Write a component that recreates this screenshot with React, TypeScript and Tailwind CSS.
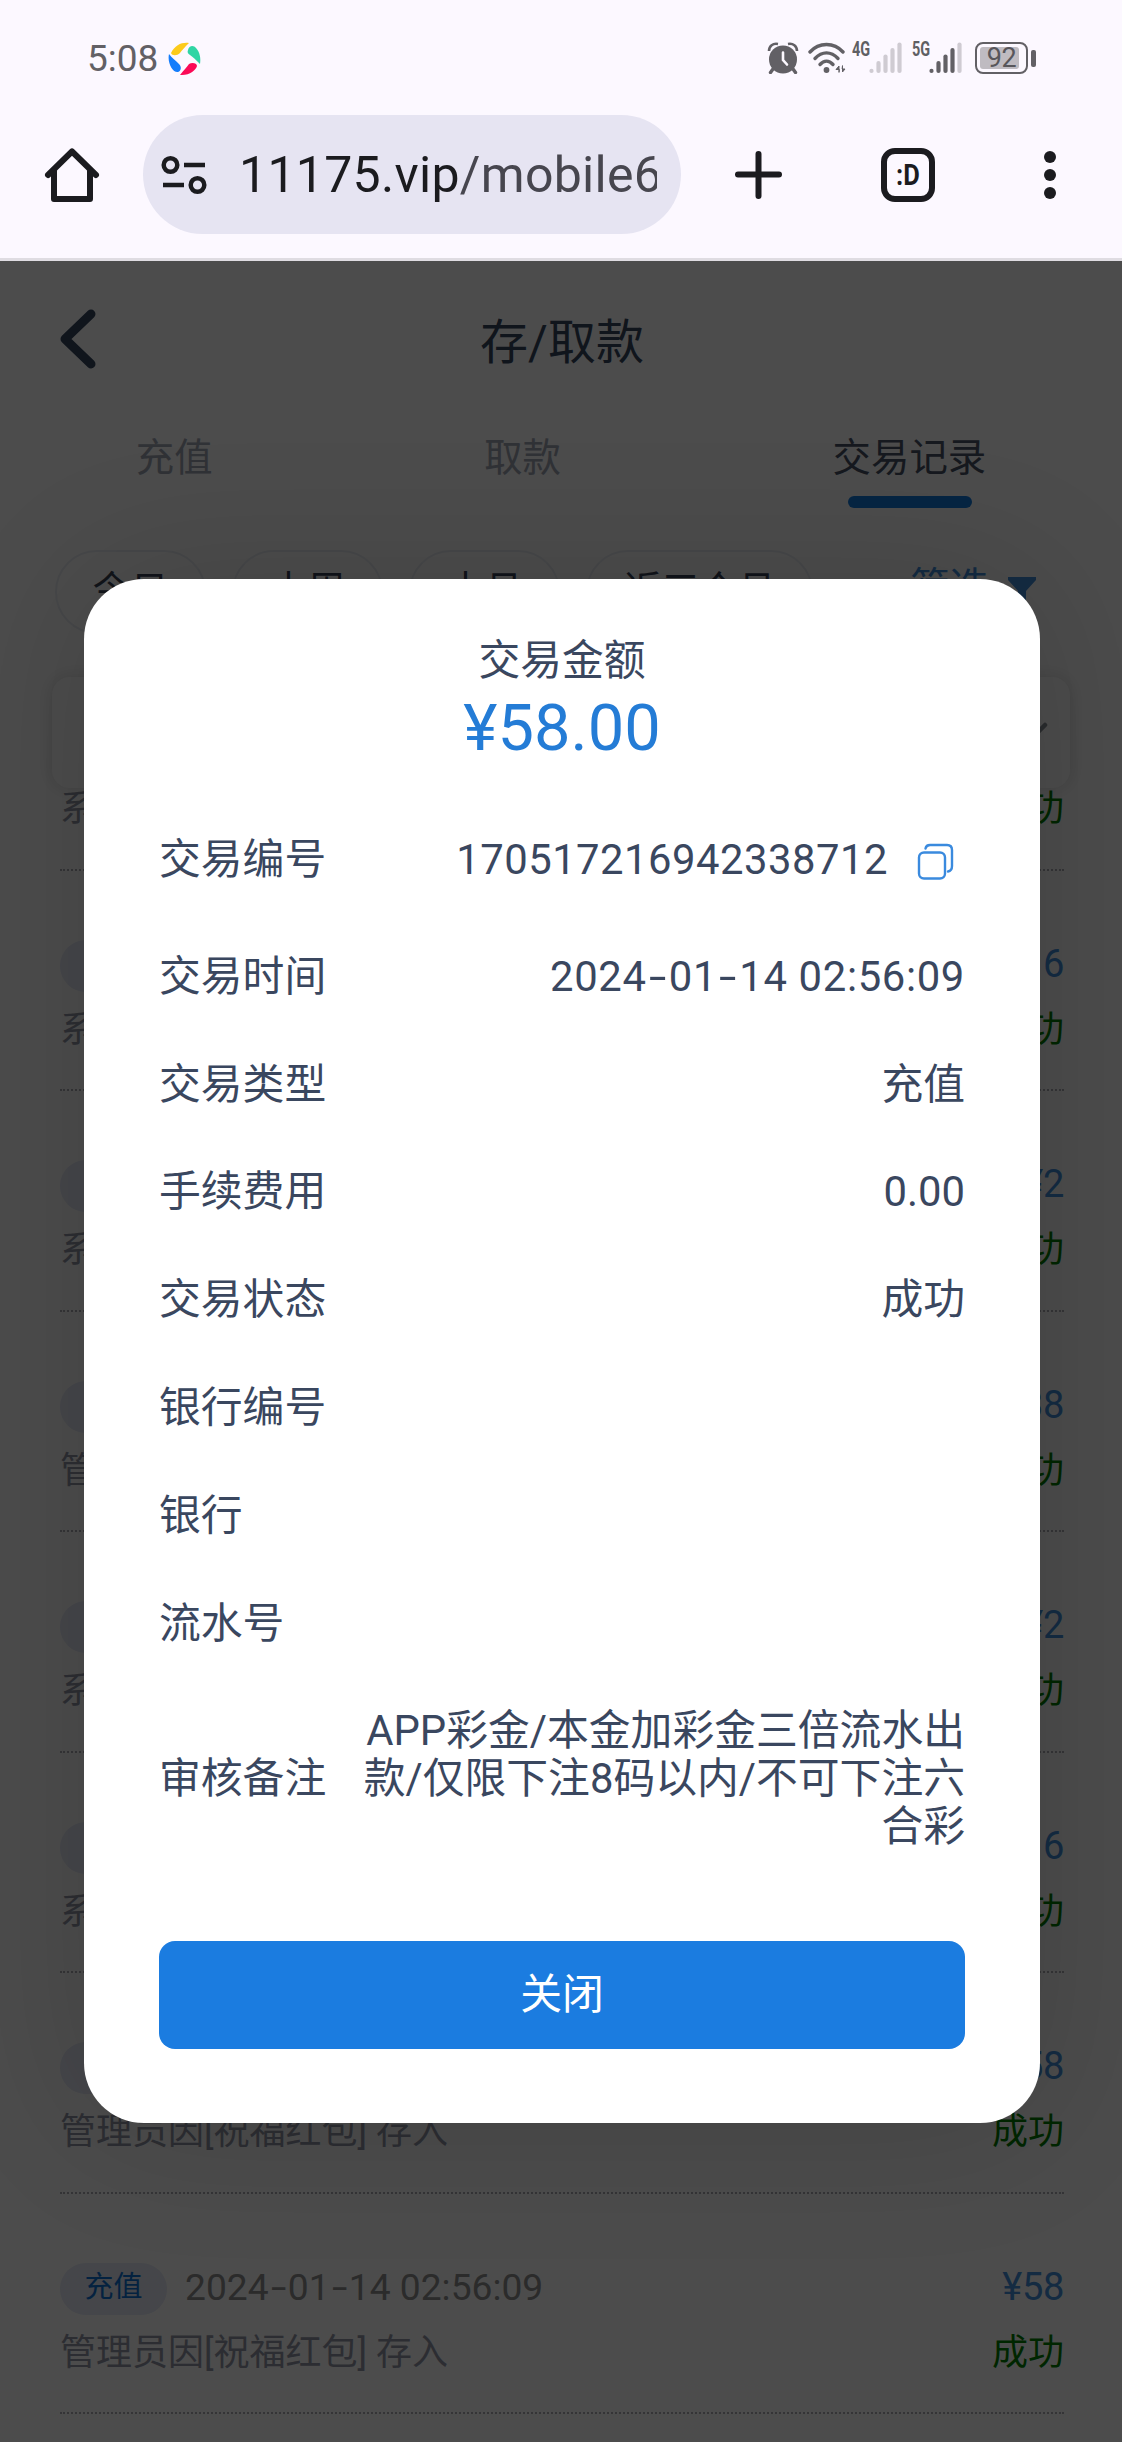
// src/App.tsx
import React from 'react';

interface TransactionRecord {
  id: number;
  createdAt: string;
  description: string;
  amount: string;
}

interface DetailRowProps {
  label: string;
  children?: React.ReactNode;
}

const records: TransactionRecord[] = [
  { id: 1, createdAt: '2024-01-14 02:56:09', description: '系统因[祝福红包] 存入', amount: '¥16' },
  { id: 2, createdAt: '2024-01-14 02:56:09', description: '系统因[祝福红包] 存入', amount: '¥16' },
  { id: 3, createdAt: '2024-01-14 02:56:09', description: '系统因[祝福红包] 存入', amount: '¥2' },
  { id: 4, createdAt: '2024-01-14 02:56:09', description: '管理员因[祝福红包] 存入', amount: '¥38' },
  { id: 5, createdAt: '2024-01-14 02:56:09', description: '系统因[祝福红包] 存入', amount: '¥2' },
  { id: 6, createdAt: '2024-01-14 02:56:09', description: '系统因[祝福红包] 存入', amount: '¥16' },
  { id: 7, createdAt: '2024-01-14 02:56:09', description: '管理员因[祝福红包] 存入', amount: '¥58' },
  { id: 8, createdAt: '2024-01-14 02:56:09', description: '管理员因[祝福红包] 存入', amount: '¥58' },
];

const ranges = ['今日', '本周', '本月', '近三个月'];

// dates are set with wide dashes
const DateText: React.FC<{ value: string }> = ({ value }) => (
  <>
    {value.split('-').map((part, i) => (
      <React.Fragment key={i}>
        {i > 0 && <span className="inline-block scale-x-[1.5] px-[0.12em]">-</span>}
        {part}
      </React.Fragment>
    ))}
  </>
);

const SignalBars: React.FC<{ label: string; active: number }> = ({ label, active }) => (
  <div className="flex h-[32px] items-end">
    <span className="h-[32px] w-[17px] origin-left scale-x-[0.74] text-[19.5px] leading-[16px] font-bold text-[#5f5f63]">
      {label}
    </span>
    <svg width="34" height="32" viewBox="0 0 34 32" strokeWidth="4.2" strokeLinecap="round">
      {[28.9, 21, 14.5, 8, 2.5].map((y, i) => (
        <line key={y} x1={2.5 + i * 7} x2={2.5 + i * 7} y1={y} y2="29" stroke={i < active ? '#626065' : '#cfcbd2'} />
      ))}
    </svg>
  </div>
);

const StatusBar: React.FC = () => (
  <div className="flex h-[115px] items-start justify-between pt-[42px] pr-[86px] pl-[87px]">
    <div className="flex items-center gap-[10px]">
      <span className="text-[37px] leading-[32px] text-[#626065]">5:08</span>
      <svg width="33" height="34" viewBox="0 0 33 34">
        <path d="M3 11C7 3 14 0 21 1C17 5 14 8 12 11C9 14 4 14 3 11Z" fill="#fccb1c" />
        <path d="M20 8C21 3 26 3 28 6C32 10 33 17 32 22C28 18 25 15 22 13C20 12 19 10 20 8Z" fill="#30d5a4" />
        <path d="M12 33C16 28 19 25 21 22C24 20 29 21 29 24C28 28 21 34 12 33Z" fill="#fb0a56" />
        <path d="M1 12C4 16 7 18 11 22C14 25 13 29 10 30C5 31 -1 21 1 12Z" fill="#147dfb" />
      </svg>
    </div>
    <div className="flex items-start">
      <svg width="32" height="32" viewBox="0 0 32 32">
        <circle cx="16" cy="17.5" r="14" fill="#626065" />
        <path d="M2 9C2 4 6 1 11 2M30 9C30 4 26 1 21 2" fill="none" stroke="#626065" strokeWidth="2.6" />
        <path d="M6 27L3.5 30.5M26 27L28.5 30.5" stroke="#626065" strokeWidth="3.4" strokeLinecap="round" />
        <path d="M16 10.500V18L20 22.500" fill="none" stroke="#fcf8ff" strokeWidth="2.6" strokeLinecap="round" />
      </svg>
      <svg className="ml-[9px]" width="38" height="32" viewBox="0 0 38 32" fill="none" stroke="#626065" strokeLinecap="round">
        <path d="M2 10C11 0 26 0 35 10" strokeWidth="3.4" />
        <path d="M7 16.500C14 9 23 9 30 16.500" strokeWidth="3.4" />
        <path d="M12 22.500C16 18 21 18 25 22.500" strokeWidth="3.4" />
        <circle cx="18.500" cy="28" r="2.900" fill="#626065" stroke="none" />
        <path d="M31 30V24L28 27.500H31ZM34.500 24V30L37 27H34.500Z" fill="#626065" strokeWidth="1" />
      </svg>
      <div className="ml-[6px]">
        <SignalBars label="4G" active={0} />
      </div>
      <div className="ml-[9px]">
        <SignalBars label="5G" active={4} />
      </div>
      <div className="ml-[12px] flex items-center">
        <div className="flex h-[32px] w-[53px] rounded-[8px] border-[2.5px] border-[#626065] p-[3px]">
          <div className="flex-1 rounded-[3px] bg-[#bfbbc1] pl-[4px] text-center text-[27px] leading-[22px] tracking-[-0.5px] text-[#58565b]">
            92
          </div>
          <div className="w-[4px]" />
        </div>
        <div className="ml-[3px] h-[17px] w-[5px] rounded-[2px] bg-[#626065]" />
      </div>
    </div>
  </div>
);

const BrowserBar: React.FC = () => (
  <div className="flex h-[119px] items-center">
    <svg className="ml-[44px]" width="56" height="58" viewBox="0 0 56 58" fill="none" stroke="#1b1b1f" strokeWidth="6" strokeLinejoin="round" strokeLinecap="round">
      <path d="M4 29L28 5.500L52 29" />
      <path d="M10 25V53H46V25" />
    </svg>
    <div className="ml-[43px] flex h-[119px] w-[538px] items-center rounded-full bg-[#e6e4f2] pl-[17px]">
      <svg width="48" height="42" viewBox="0 0 48 42" fill="none" stroke="#1b1b1f" strokeWidth="4.500">
        <circle cx="10.500" cy="11" r="6.800" />
        <path d="M24 11H45M3 31H24" />
        <circle cx="37.500" cy="31" r="6.800" />
      </svg>
      <div className="ml-[31px] w-[418px] overflow-hidden text-[50px] leading-[66px] tracking-[0.3px] whitespace-nowrap text-[#1b1b1f]">
        11175.vip<span className="text-[#47464f]">/mobile6</span>
      </div>
    </div>
    <svg className="ml-[53px]" width="49" height="50" viewBox="0 0 49 50" stroke="#1b1b1f" strokeWidth="6" strokeLinecap="round">
      <path d="M24.500 4V46M4 24.500H45" />
    </svg>
    <div className="ml-[98px] flex h-[54px] w-[54px] items-center justify-center rounded-[14px] border-[6px] border-[#1b1b1f]">
      <span className="scale-x-[0.85] text-[30px] leading-[40px] font-bold text-[#1b1b1f]">:D</span>
    </div>
    <div className="ml-[109px] flex flex-col gap-[6px]">
      <div className="size-[12px] rounded-full bg-[#1b1b1f]" />
      <div className="size-[12px] rounded-full bg-[#1b1b1f]" />
      <div className="size-[12px] rounded-full bg-[#1b1b1f]" />
    </div>
  </div>
);

const RecordItem: React.FC<{ record: TransactionRecord }> = ({ record }) => (
  <li className="h-[220.5px] border-b-2 border-dotted border-[#b0b0b4] pt-[69px]">
    <div className="flex h-[52px] items-center">
      <span className="h-[52px] w-[107px] rounded-full bg-[#e6eaf7] text-center text-[29px] leading-[49px] text-[#0e73d6]">充值</span>
      <span className="ml-[18px] pb-[3px] text-[37.2px] leading-[49px] text-[#8f8f8f]">
        <DateText value={record.createdAt} />
      </span>
      <span className="ml-auto pb-[3px] text-[38px] leading-[49px] tracking-[-0.3px] text-[#4590dd]">{record.amount}</span>
    </div>
    <div className="mt-[14px] flex justify-between text-[36px] leading-[48px]">
      <span className="text-[#9498a8]">{record.description}</span>
      <span className="text-[#008000]">成功</span>
    </div>
  </li>
);

const TransactionPage: React.FC = () => (
  <div className="bg-white">
    <div className="flex h-[162px] items-center">
      <svg className="ml-[57px] -mt-[6px]" width="40" height="62" viewBox="0 0 40 62" fill="none" stroke="#36475f" strokeWidth="9" strokeLinecap="round" strokeLinejoin="round">
        <path d="M34 6L8 31L34 56" />
      </svg>
      <h1 className="mr-[95px] flex-1 pt-[2px] text-center text-[48px] leading-[66px] text-[#36475f]">存/取款</h1>
    </div>
    <div className="flex justify-around pt-[5px] text-[38.4px] leading-[60px]">
      <span className="text-[#a2a7b5]">充值</span>
      <span className="text-[#a2a7b5]">取款</span>
      <span className="flex flex-col items-center text-[#4b5568]">
        交易记录
        <span className="mt-[8px] h-[12px] w-[124px] translate-x-[1px] rounded-full bg-[#177cdf]" />
      </span>
    </div>
    <div className="mt-[42px] flex gap-[26px] pl-[55px] text-[38px] leading-[76px]">
      {ranges.map((range) => (
        <span key={range} className="h-[84px] rounded-full border-2 border-[#eceff3] px-[35.5px] text-[#3b4459]">
          {range}
        </span>
      ))}
      <span className="ml-[71px] flex text-[39.5px] text-[#4590dd]">
        筛选
        <svg className="mt-[26px] ml-[18px]" width="30" height="34" viewBox="0 0 30 34" fill="#4590dd">
          <path d="M1 1H29V4L19 15V33L11 27V15L1 4Z" />
        </svg>
      </span>
    </div>
    <div className="relative z-10 mx-auto mt-[43px] flex h-[111px] w-[1018px] items-center justify-end rounded-[18px] bg-white pr-[21px] shadow-[0_0_18px_rgba(0,0,0,0.14)]">
      <svg width="40" height="24" viewBox="0 0 40 24" fill="none" stroke="#8b8f96" strokeWidth="4.500" strokeLinecap="round">
        <path d="M4 4L20 20L36 4" />
      </svg>
    </div>
    <ul className="-mt-[138px] pr-[58px] pl-[60px]">
      {records.map((record) => (
        <RecordItem key={record.id} record={record} />
      ))}
    </ul>
  </div>
);

const DetailRow: React.FC<DetailRowProps> = ({ label, children }) => (
  <div className="flex items-center justify-between py-[29.9px]">
    <span className="shrink-0">{label}</span>
    <span className="text-right">{children}</span>
  </div>
);

const TransactionDialog: React.FC = () => (
  <div className="w-[956px] rounded-[60px] bg-white px-[75px] pt-[58px] pb-[74px] text-[41.8px] leading-[48px] text-[#3a475f] shadow-[0_0_150px_rgba(0,0,0,0.14)]">
    <div className="flex h-[160px] flex-col items-center">
      <span>交易金额</span>
      <span className="mt-[4px] text-[65px] leading-[78px] text-[#247cd6]">¥58.00</span>
    </div>
    <div className="flex h-[126px] items-center justify-between">
      <span>交易编号</span>
      <span className="flex items-center tracking-[0.5px]">
        170517216942338712
        <svg className="mt-[3px] mr-[11px] ml-[29px]" width="37" height="38" viewBox="0 0 37 38" fill="none" stroke="#3a8ade" strokeWidth="2.4" strokeLinecap="round">
          <rect x="2" y="9.500" width="26" height="26" rx="5" />
          <path d="M8.500 5.500C9 3 10.500 2 13 2H30C33.500 2 35 3.500 35 7V23C35 26 33.500 28 31 28.500" />
        </svg>
      </span>
    </div>
    <DetailRow label="交易时间">
      <span className="tracking-[0.65px]">
        <DateText value="2024-01-14 02:56:09" />
      </span>
    </DetailRow>
    <DetailRow label="交易类型">充值</DetailRow>
    <DetailRow label="手续费用">0.00</DetailRow>
    <DetailRow label="交易状态">成功</DetailRow>
    <DetailRow label="银行编号" />
    <DetailRow label="银行" />
    <DetailRow label="流水号" />
    <DetailRow label="审核备注">
      APP彩金/本金加彩金三倍流水出
      <br />
      款/仅限下注8码以内/不可下注六
      <br />
      合彩
    </DetailRow>
    <button className="mt-[60px] block h-[108px] w-full rounded-[16px] bg-[#1b7ce0] text-center text-white">关闭</button>
  </div>
);

const App: React.FC = () => {
  return (
    <div className="flex h-[2442px] w-[1122px] flex-col overflow-hidden font-['Roboto','Noto_Sans_CJK_SC',sans-serif]">
      <header className="h-[261px] shrink-0 border-b-[3px] border-[#dfdce2] bg-[#fcf8ff]">
        <StatusBar />
        <BrowserBar />
      </header>
      <main className="relative h-[2181px] overflow-hidden">
        <TransactionPage />
        <div className="absolute inset-0 z-20 flex items-start justify-center bg-black/70 pt-[318px] pl-[2px]">
          <TransactionDialog />
        </div>
      </main>
    </div>
  );
};

export default App;
